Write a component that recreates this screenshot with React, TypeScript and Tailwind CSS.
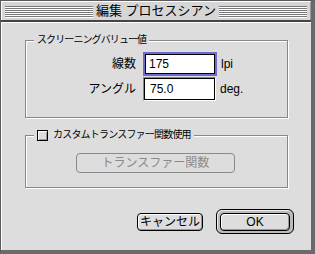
import React from "react";

function TitleLines() {
  // raised ridges in the title bar
  return (
    <div className="flex flex-1 flex-col pt-[4px]">
      {[0, 1, 2, 3, 4, 5].map((i) => (
        <div key={i}>
          <div className="h-[1px] bg-[#7a7a7a]" />
          <div className="h-[1px] bg-white" />
        </div>
      ))}
    </div>
  );
}

function FieldRow({ label, value, unit, focused }: { label: string; value: string; unit: string; focused?: boolean }) {
  return (
    <div className="flex items-center">
      <div className="w-[111px] pr-[1px] text-right text-[12px] leading-[14px]">{label}</div>
      <div className="ml-[6px]">
        {focused ? (
          <div className="h-[24px] w-[74px] border-2 border-[#6c6cd0]">
            <div className="h-full border border-black bg-white pl-[3px] text-[12px] leading-[18px]">{value}</div>
          </div>
        ) : (
          <div className="h-[24px] w-[73px] border border-t-[#888] border-l-[#888] border-r-white border-b-white">
            <div className="h-full border border-black bg-white pl-[5px] pt-[1px] text-[12px] leading-[18px]">{value}</div>
          </div>
        )}
      </div>
      <div className="ml-[4px] text-[12px] leading-[14px]">{unit}</div>
    </div>
  );
}

export default function App() {
  return (
    <div className="flex h-[254px] w-[315px] flex-col border-l border-t border-[#5a5a5a] border-r-[4px] border-b-[4px] border-r-[#6a6a6a] border-b-[#6a6a6a] bg-[#dddddd] font-['Liberation_Sans','Noto_Sans_CJK_JP',sans-serif] text-black">
      {/* title bar */}
      <div className="flex h-[19px] items-start border-l border-t border-white border-r border-r-[#999] bg-[#d6d6d6] px-[3px]">
        <TitleLines />
        <div className="px-[3px] text-[13px] leading-[18px]">編集 プロセスシアン</div>
        <TitleLines />
      </div>
      <div className="h-[2px] bg-[#444]" />

      {/* body */}
      <div className="flex flex-1 flex-col border-l border-t border-white">
        <fieldset className="ml-[23px] mt-[10px] w-[263px] border border-[#888] shadow-[1px_1px_0_#fff,inset_1px_1px_0_#fff] pb-[16px] pt-[5px]">
          <legend className="ml-[8px] bg-[#dddddd] px-[3px] text-[10px] leading-[14px] tracking-[-0.9px]">
            スクリーニングバリュー値
          </legend>
          <div className="flex flex-col gap-[1px]">
            <FieldRow label="線数" value="175" unit="lpi" focused />
            <FieldRow label="アングル" value="75.0" unit="deg." />
          </div>
        </fieldset>

        <fieldset className="ml-[23px] mt-[10px] w-[263px] border border-[#888] shadow-[1px_1px_0_#fff,inset_1px_1px_0_#fff] pb-[14px] pt-[11px]">
          <legend className="ml-[8px] flex h-[14px] items-center gap-[5px] bg-[#dddddd] px-[3px] text-[10px] leading-[14px] tracking-[-0.8px]">
            <span className="h-[11px] w-[11px] border border-black bg-[#dddddd] shadow-[inset_1px_1px_0_#fff,inset_-1px_-1px_0_#999]" />
            <span>カスタムトランスファー関数使用</span>
          </legend>
          <div className="ml-[50px] flex h-[20px] w-[159px] items-center justify-center rounded-[4px] border border-[#8a8a8a] text-[12px] leading-[14px] text-[#8a8a8a]">
            トランスファー関数
          </div>
        </fieldset>

        <div className="mt-[21px] flex items-center justify-end gap-[13px] pr-[17px]">
          <button className="h-[18px] w-[66px] rounded-[4px] border border-black bg-[#dddddd] text-[12px] leading-[14px] shadow-[inset_1px_1px_0_#fff,inset_-1px_-1px_0_#999]">
            キャンセル
          </button>
          <div className="flex h-[25px] w-[78px] items-center justify-center rounded-[6px] border border-black bg-[#bbbbbb] shadow-[inset_1px_1px_0_#eee]">
            <button className="h-[18px] w-[70px] rounded-[4px] border border-black bg-[#dddddd] text-[12px] leading-[14px] shadow-[inset_1px_1px_0_#fff,inset_-1px_-1px_0_#999]">
              OK
            </button>
          </div>
        </div>
      </div>
    </div>
  );
}
